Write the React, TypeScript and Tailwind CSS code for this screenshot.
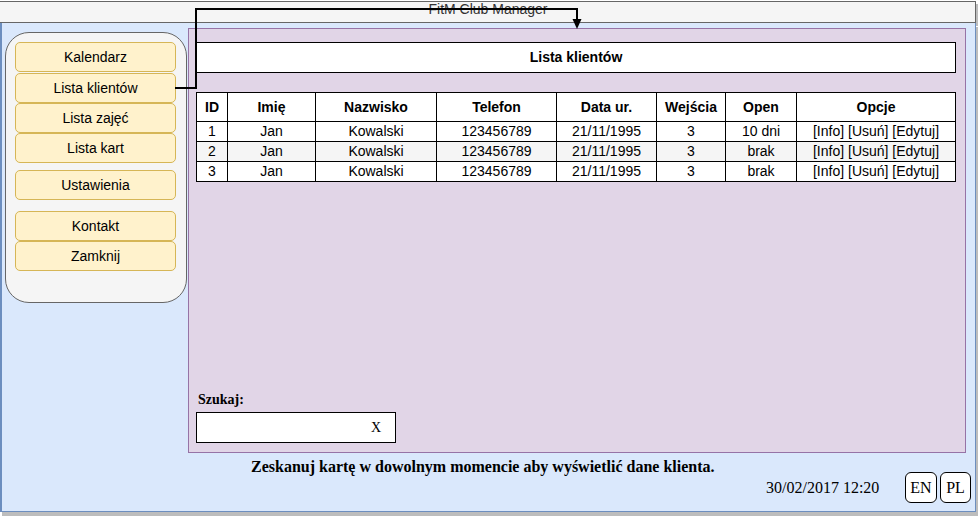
import React from "react";

const sans = { fontFamily: '"Liberation Sans", Arial, sans-serif' };

const menu1 = ["Kalendarz", "Lista klientów", "Lista zajęć", "Lista kart"];

function MenuBtn({ label, className = "" }: { label: string; className?: string }) {
  return (
    <div
      className={`h-[30px] w-[161px] shrink-0 rounded-[5px] border border-[#d6b656] bg-[#fff2cc] flex items-center justify-center text-[14px] text-black ${className}`}
    >
      {label}
    </div>
  );
}

const headers = ["ID", "Imię", "Nazwisko", "Telefon", "Data ur.", "Wejścia", "Open", "Opcje"];
const rows = [
  ["1", "Jan", "Kowalski", "123456789", "21/11/1995", "3", "10 dni", "[Info] [Usuń] [Edytuj]"],
  ["2", "Jan", "Kowalski", "123456789", "21/11/1995", "3", "brak", "[Info] [Usuń] [Edytuj]"],
  ["3", "Jan", "Kowalski", "123456789", "21/11/1995", "3", "brak", "[Info] [Usuń] [Edytuj]"],
];

export default function App() {
  return (
    <div
      className="relative w-[978px] h-[516px] bg-white overflow-hidden font-['Liberation_Sans',Arial,sans-serif]"
      style={sans}
    >
      {/* top bar */}
      <div className="mt-px w-[976px] h-[22px] border-t border-r border-b border-[#666666] bg-[#f5f5f5] shadow-[3px_3px_0_#bdbdbd] flex justify-center items-start">
        <span className="-mt-px text-[14px] leading-[16px] text-[#333333] ml-[1px]">FitM Club Manager</span>
      </div>

      {/* blue area */}
      <div className="relative w-[976px] h-[489px] border-l-2 border-r border-b border-[#6c8ebf] bg-[#dae8fc] shadow-[2px_4px_0_#bdbdbd] flex flex-col">
        <div className="flex items-start">
          {/* sidebar */}
          <div className="ml-[3px] mt-[9px] w-[182px] h-[271px] rounded-[24px] border border-[#666666] bg-[#f5f5f5] pl-[9px] pt-[9px] flex flex-col">
            <MenuBtn label={menu1[0]} />
            <MenuBtn label={menu1[1]} className="mt-px" />
            <MenuBtn label={menu1[2]} />
            <MenuBtn label={menu1[3]} />
            <MenuBtn label="Ustawienia" className="mt-[7px]" />
            <MenuBtn label="Kontakt" className="mt-[11px]" />
            <MenuBtn label="Zamknij" />
          </div>

          {/* main panel */}
          <div className="ml-px mt-[5px] w-[778px] h-[425px] border border-[#9673a6] bg-[#e1d5e7] pl-[7px] pt-[13px] pb-[9px] flex flex-col">
            <div className="w-[760px] h-[31px] border border-black bg-white flex items-center justify-center text-[14px] font-bold text-black">
              Lista klientów
            </div>

            <div className="mt-[19px] w-[760px] border-t border-l border-black bg-white">
              <div className="grid grid-cols-[31px_88px_121px_120px_100px_69px_71px_159px]">
                {headers.map((h) => (
                  <div
                    key={h}
                    className="h-[29px] border-r border-b border-black flex items-center justify-center text-[14px] font-bold text-black whitespace-nowrap"
                  >
                    {h}
                  </div>
                ))}
              </div>
              {rows.map((r, i) => (
                <div
                  key={i}
                  className={`grid grid-cols-[31px_88px_121px_120px_100px_69px_71px_159px] ${i === 1 ? "bg-[#f5f5f5]" : "bg-white"}`}
                >
                  {r.map((c, j) => (
                    <div
                      key={j}
                      className="h-[20px] border-r border-b border-black flex items-center justify-center text-[14px] text-black whitespace-nowrap"
                    >
                      {c}
                    </div>
                  ))}
                </div>
              ))}
            </div>

            <div className="mt-auto font-['Liberation_Serif',serif]" style={{ fontFamily: '"Liberation Serif", "Times New Roman", serif' }}>
              <div className="ml-[2px] h-4 leading-4 text-[14px] font-bold text-black">Szukaj:</div>
              <div className="mt-[4px] w-[200px] h-[31px] border border-black bg-white flex items-center justify-end pr-[14px] text-[14px] text-black">
                X
              </div>
            </div>
          </div>
        </div>

        {/* bottom row */}
        <div
          className="flex items-start text-black"
          style={{ fontFamily: '"Liberation Serif", "Times New Roman", serif' }}
        >
          <div className="w-[764px] pl-[249px] pt-[5px] text-[16px] leading-[18px] font-bold whitespace-nowrap">
            Zeskanuj kartę w dowolnym momencie aby wyświetlić dane klienta.
          </div>
          <div className="w-[139px] pt-[26px] text-[16px] leading-[18px] whitespace-nowrap">30/02/2017 12:20</div>
          <div className="pt-[19px] flex gap-[3px]">
            <div className="w-[32px] h-[31px] rounded-[6px] border border-black bg-white flex items-center justify-center text-[16px]">
              EN
            </div>
            <div className="w-[31px] h-[31px] rounded-[6px] border border-black bg-white flex items-center justify-center text-[16px]">
              PL
            </div>
          </div>
        </div>
      </div>

      {/* connector */}
      <svg className="absolute left-0 top-0 pointer-events-none" width="978" height="516">
        <path d="M175 88 H196 V9 H577 V20" fill="none" stroke="#000" strokeWidth="2" />
        <polygon points="572.5,19 581.5,19 577,29" fill="#000" />
      </svg>
    </div>
  );
}
